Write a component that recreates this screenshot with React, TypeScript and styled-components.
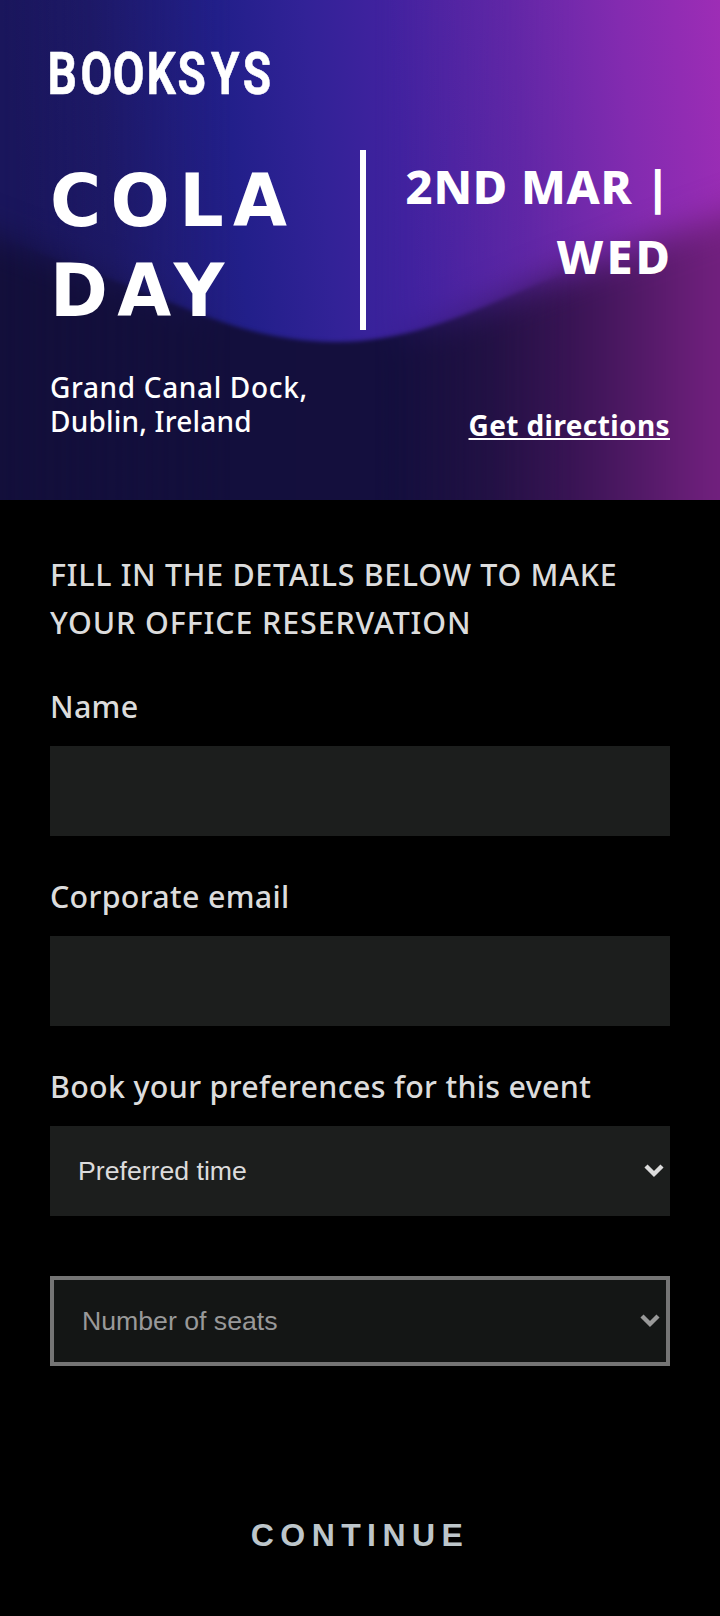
import React from "react";
import styled, { createGlobalStyle } from "styled-components";

const Reset = createGlobalStyle`
  * { box-sizing: border-box; }
  body { margin: 0; background: #000; }
  h1, p { margin: 0; }
`;

const Page = styled.main`
  width: 720px;
  height: 1616px;
  background: #000;
  color: #dcdcdc;
  font-family: "Noto Sans", "Open Sans", sans-serif;
`;

const Header = styled.header`
  position: relative;
  height: 500px;
  padding: 44px 50px 0;
  color: #fff;
  overflow: hidden;
`;

const Backdrop = styled.svg`
  position: absolute;
  inset: 0;
  width: 100%;
  height: 100%;
`;

const HeaderContent = styled.div`
  position: relative;
`;

const Logo = styled.svg`
  display: block;
  width: 232px;
  height: 58px;
  overflow: visible;
  font-family: Roboto, sans-serif;
  font-weight: 700;
`;

const EventRow = styled.div`
  display: flex;
  justify-content: space-between;
  height: 180px;
  margin-top: 48px;
`;

const EventName = styled.h1`
  width: 310px;
  flex: none;
  padding-top: 6px;
  font: 700 73px/90px "DejaVu Sans", sans-serif;
  letter-spacing: 9.8px;
  transform: scaleX(0.955);
  transform-origin: left;
`;

const Divider = styled.div`
  flex: none;
  width: 6px;
  background: #fff;
`;

const EventDate = styled.p`
  width: 304px;
  flex: none;
  padding-top: 1px;
  text-align: right;
  font-size: 47px;
  font-weight: 800;
  line-height: 70px;
`;

const DateLine = styled.span<{ $spacing: number; $inset: number }>`
  display: block;
  white-space: nowrap;
  letter-spacing: ${(p) => p.$spacing}px;
  margin-right: ${(p) => p.$inset}px;
`;

const VenueRow = styled.div`
  display: flex;
  justify-content: space-between;
  margin-top: 40px;
  font-size: 28px;
  line-height: 34px;
`;

const Venue = styled.p`
  font-weight: 500;
`;

const TextLine = styled.span<{ $spacing: number }>`
  display: block;
  letter-spacing: ${(p) => p.$spacing}px;
`;

const Directions = styled.a`
  margin-top: 38px;
  font-weight: 700;
  letter-spacing: 0.4px;
  color: #fff;
  text-decoration: underline;
  text-decoration-thickness: 2px;
  text-underline-offset: 2px;
  text-decoration-skip-ink: none;
`;

const Form = styled.form`
  padding: 51px 50px 0;
`;

const Intro = styled.p`
  font-size: 30.4px;
  font-weight: 500;
  line-height: 48px;
  white-space: nowrap;
`;

const Label = styled.label<{ $top: number }>`
  display: block;
  margin-top: ${(p) => p.$top}px;
  font-size: 30.4px;
  font-weight: 500;
  line-height: 40px;
  letter-spacing: 0.32px;
`;

const Input = styled.input`
  display: block;
  width: 100%;
  height: 90px;
  margin-top: 19px;
  padding: 0 28px;
  border: 0;
  background: #1c1e1d;
  color: #dcdcdc;
`;

const SelectBox = styled.div<{ $top: number; $disabled?: boolean }>`
  display: flex;
  align-items: center;
  height: 90px;
  margin-top: ${(p) => p.$top}px;
  padding-right: 6px;
  border: ${(p) => (p.$disabled ? "4px solid #757575" : "0")};
  background: ${(p) => (p.$disabled ? "#141615" : "#1c1e1d")};
  color: ${(p) => (p.$disabled ? "#999" : "#dcdcdc")};
`;

const Select = styled.select`
  flex: 1;
  height: 100%;
  padding: 0 28px;
  border: 0;
  appearance: none;
  background: transparent;
  color: inherit;
  opacity: 1;
  font: 26.67px "Liberation Sans", Arial, sans-serif;
`;

const Submit = styled.button`
  display: block;
  width: 100%;
  height: 100px;
  margin-top: 119px;
  border: 0;
  background: none;
  color: #bdc6cb;
  font: 700 32px "Liberation Sans", Arial, sans-serif;
  letter-spacing: 6.4px;
`;

const Chevron = () => (
  <svg width="20" height="14" viewBox="0 0 20 14" fill="none">
    <path d="M2 2 10 10 18 2" stroke="currentColor" strokeWidth="4.4" />
  </svg>
);

const LOWER = "M-80 208C-20 230 50 257 110 279C190 308 250 342 335 342C430 342 500 295 580 268C640 247 700 222 800 190V560H-80Z";

const Waves = () => (
  <Backdrop viewBox="0 0 720 500" preserveAspectRatio="none">
    <defs>
      <linearGradient id="upper" gradientUnits="userSpaceOnUse" x1="0" y1="0" x2="720" y2="-70">
        <stop offset="0" stopColor="#1a165c" />
        <stop offset="0.12" stopColor="#1d1966" />
        <stop offset="0.3" stopColor="#221f8a" />
        <stop offset="0.42" stopColor="#322297" />
        <stop offset="0.53" stopColor="#41229f" />
        <stop offset="0.7" stopColor="#6127a6" />
        <stop offset="0.85" stopColor="#832bb0" />
        <stop offset="1" stopColor="#9f2db6" />
      </linearGradient>
      <linearGradient id="lower" gradientUnits="userSpaceOnUse" x1="0" y1="0" x2="720" y2="0">
        <stop offset="0" stopColor="#130f3b" />
        <stop offset="0.55" stopColor="#140f3e" />
        <stop offset="0.68" stopColor="#221144" />
        <stop offset="0.8" stopColor="#3a1455" />
        <stop offset="0.9" stopColor="#551a69" />
        <stop offset="1" stopColor="#73207f" />
      </linearGradient>
      <linearGradient id="fade" gradientUnits="userSpaceOnUse" x1="0" y1="0" x2="720" y2="0">
        <stop offset="0" stopColor="#fff" />
        <stop offset="0.32" stopColor="#000" />
        <stop offset="0.52" stopColor="#000" />
        <stop offset="0.8" stopColor="#fff" />
      </linearGradient>
      <mask id="sides" maskUnits="userSpaceOnUse" x="0" y="0" width="720" height="500">
        <rect width="720" height="500" fill="url(#fade)" />
      </mask>
      <filter id="crisp" x="-10%" y="-20%" width="120%" height="140%" colorInterpolationFilters="sRGB">
        <feGaussianBlur stdDeviation="2" />
      </filter>
      <filter id="soft" x="-10%" y="-20%" width="120%" height="140%" colorInterpolationFilters="sRGB">
        <feGaussianBlur stdDeviation="17" />
      </filter>
    </defs>
    <rect width="720" height="500" fill="url(#upper)" />
    <path d={LOWER} fill="url(#lower)" filter="url(#crisp)" />
    <g mask="url(#sides)">
      <rect width="720" height="500" fill="url(#upper)" />
      <path d={LOWER} fill="url(#lower)" filter="url(#soft)" />
    </g>
  </Backdrop>
);

export default function App() {
  return (
    <Page>
      <Reset />
      <Header>
        <Waves />
        <HeaderContent>
          <Logo viewBox="0 0 232 58" role="img" aria-label="Booksys">
            <text
              transform="scale(.78 1)"
              x="-3.3 39.2 80.5 123.6 163.6 206.5 247"
              y="49.7"
              fontSize="59"
              fill="#fff"
              stroke="#fff"
              strokeWidth="0.6"
              strokeLinejoin="round"
            >
              BOOKSYS
            </text>
          </Logo>
          <EventRow>
            <EventName>
              COLA
              <br />
              DAY
            </EventName>
            <Divider />
            <EventDate>
              <DateLine $spacing={0.7} $inset={-1}>2ND MAR |</DateLine>
              <DateLine $spacing={3} $inset={-3}>WED</DateLine>
            </EventDate>
          </EventRow>
          <VenueRow>
            <Venue>
              <TextLine $spacing={0.65}>Grand Canal Dock,</TextLine>
              <TextLine $spacing={0.2}>Dublin, Ireland</TextLine>
            </Venue>
            <Directions href="#directions">Get directions</Directions>
          </VenueRow>
        </HeaderContent>
      </Header>
      <Form>
        <Intro>
          <TextLine $spacing={0.7}>FILL IN THE DETAILS BELOW TO MAKE</TextLine>
          <TextLine $spacing={0.9}>YOUR OFFICE RESERVATION</TextLine>
        </Intro>
        <Label $top={40} htmlFor="name">Name</Label>
        <Input id="name" />
        <Label $top={41} htmlFor="email">Corporate email</Label>
        <Input id="email" />
        <Label $top={41} htmlFor="time">Book your preferences for this event</Label>
        <SelectBox $top={19}>
          <Select id="time">
            <option>Preferred time</option>
          </Select>
          <Chevron />
        </SelectBox>
        <SelectBox $top={60} $disabled>
          <Select disabled>
            <option>Number of seats</option>
          </Select>
          <Chevron />
        </SelectBox>
        <Submit type="button">CONTINUE</Submit>
      </Form>
    </Page>
  );
}
